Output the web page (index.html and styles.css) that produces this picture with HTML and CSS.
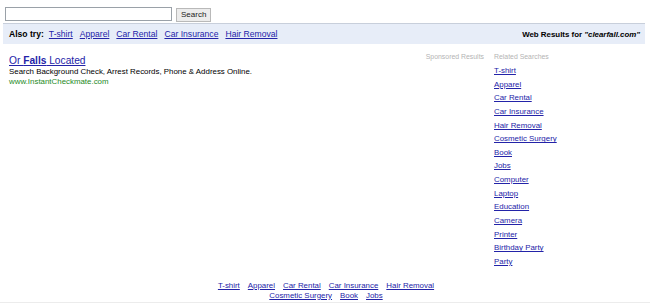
FILE: index.html
```html
<!DOCTYPE html>
<html lang="en">
<head>
  <meta charset="UTF-8" />
  <title>clearfall.com</title>
  <link rel="stylesheet" href="styles.css">
</head>
<body>
  <form class="search" onsubmit="return false">
    <input type="text" class="search-box" value="">
    <button type="submit" class="search-btn">Search</button>
  </form>

  <div class="bar">
    <div class="also">
      <b>Also try:</b>
      <a href="#">T-shirt</a>
      <a href="#">Apparel</a>
      <a href="#">Car Rental</a>
      <a href="#">Car Insurance</a>
      <a href="#">Hair Removal</a>
    </div>
    <div class="web">Web Results for <i>"clearfall.com"</i></div>
  </div>

  <div class="main">
    <div class="ads">
      <div class="ad">
        <a href="#" class="ad-title">Or <b>Falls</b> Located</a>
        <div class="ad-desc">Search Background Check, Arrest Records, Phone &amp; Address Online.</div>
        <div class="ad-url">www.InstantCheckmate.com</div>
      </div>
      <div class="label">Sponsored Results</div>
    </div>

    <div class="related">
      <div class="label">Related Searches</div>
      <ul>
        <li><a href="#">T-shirt</a></li>
        <li><a href="#">Apparel</a></li>
        <li><a href="#">Car Rental</a></li>
        <li><a href="#">Car Insurance</a></li>
        <li><a href="#">Hair Removal</a></li>
        <li><a href="#">Cosmetic Surgery</a></li>
        <li><a href="#">Book</a></li>
        <li><a href="#">Jobs</a></li>
        <li><a href="#">Computer</a></li>
        <li><a href="#">Laptop</a></li>
        <li><a href="#">Education</a></li>
        <li><a href="#">Camera</a></li>
        <li><a href="#">Printer</a></li>
        <li><a href="#">Birthday Party</a></li>
        <li><a href="#">Party</a></li>
      </ul>
    </div>
  </div>

  <div class="footer">
    <div class="row">
      <a href="#">T-shirt</a>
      <a href="#">Apparel</a>
      <a href="#">Car Rental</a>
      <a href="#">Car Insurance</a>
      <a href="#">Hair Removal</a>
    </div>
    <div class="row">
      <a href="#">Cosmetic Surgery</a>
      <a href="#">Book</a>
      <a href="#">Jobs</a>
    </div>
  </div>

  <div class="footer more">
    <div class="row">
      <a href="#">Jobs</a>
      <a href="#">Computer</a>
    </div>
  </div>
</body>
</html>
```

FILE: styles.css
```css
body {
  margin: 0;
  padding: 0;
  background: white;
  font-family: "Liberation Sans", Arial, sans-serif;
  font-size: 8px;
  color: black;
}

a {
  color: #2323a8;
}

.search {
  display: flex;
  align-items: center;
  gap: 4px;
  padding: 5px 5px 0 5px;
  height: 18px;
}

.search-box {
  width: 167px;
  height: 14px;
  box-sizing: border-box;
  border: 1px solid #9aa1a8;
  padding: 0 2px;
  margin: 0;
  font-size: 8px;
}

.search-btn {
  height: 14px;
  box-sizing: border-box;
  margin: 1px 0 0 0;
  padding: 0 4px;
  font-family: "Liberation Sans", Arial, sans-serif;
  font-size: 8px;
  background: #ececec;
  border: 1px solid #b9b9b9;
  color: #222;
}

.bar {
  display: flex;
  justify-content: space-between;
  align-items: center;
  margin: 0 5px 0 3px;
  height: 20px;
  background: #e7edf8;
  border-top: 1px solid #c8cfdb;
  padding: 0 5px 0 6px;
}

.also {
  display: flex;
  gap: 7px;
  font-size: 8.6px;
}

.also b {
  margin-right: -2px;
}

.web {
  font-weight: bold;
  font-size: 7.9px;
}

.main {
  display: flex;
  gap: 10px;
  padding-top: 8px;
}

.ads {
  flex: 1;
  display: flex;
  justify-content: space-between;
  align-items: flex-start;
  padding-left: 9px;
}

.ad {
  margin-top: 3px;
}

.ad-title {
  display: block;
  font-size: 10.2px;
  line-height: 12px;
}

.ad-desc {
  line-height: 10px;
  font-size: 7.9px;
}

.ad-url {
  line-height: 10px;
  font-size: 7.9px;
  color: #1d8a1d;
}

.label {
  color: #b4b4b4;
  font-size: 6.9px;
  line-height: 10px;
}

.related {
  width: 156px;
}

.related ul {
  list-style: none;
  margin: 2px 0 0 0;
  padding: 0;
}

.related li {
  line-height: 13.64px;
  font-size: 7.9px;
}

.footer {
  margin-top: 12px;
}

.footer .row {
  display: flex;
  justify-content: center;
  gap: 8px;
  line-height: 10px;
  font-size: 7.9px;
  padding-left: 2px;
}

.footer.more {
  margin-top: 1px;
  border-top: 1px solid #ececec;
}
```
